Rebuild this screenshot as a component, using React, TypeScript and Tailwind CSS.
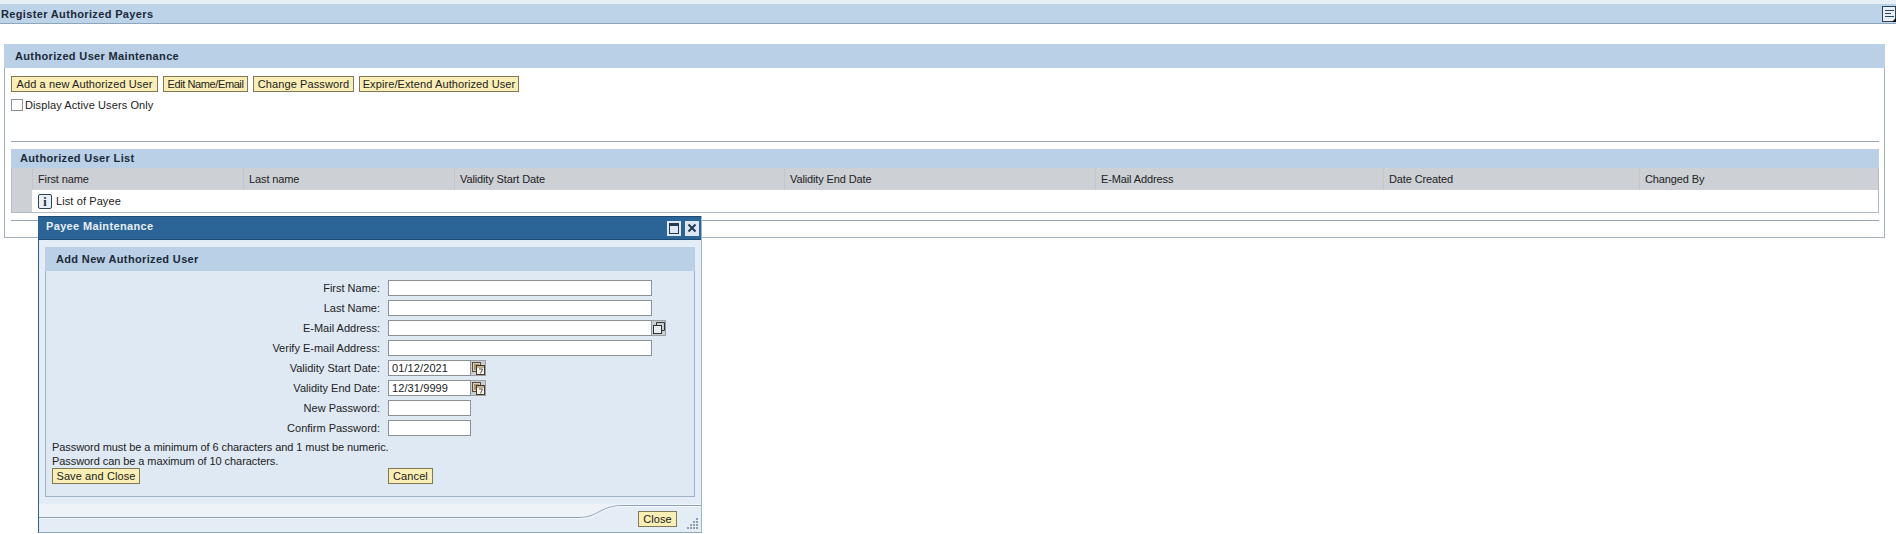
const FONT = "font-['Liberation_Sans',Arial,sans-serif]";

const columns = [
  "First name",
  "Last name",
  "Validity Start Date",
  "Validity End Date",
  "E-Mail Address",
  "Date Created",
  "Changed By",
];

function SapButton({
  label,
  className = "",
  tracking = "tracking-[0.1px]",
}: {
  label: string;
  className?: string;
  tracking?: string;
}) {
  return (
    <button
      className={`h-4 border border-[#7f7a55] bg-[#f9eeb4] text-[11px] leading-[14px] text-[#222] whitespace-nowrap ${tracking} ${className}`}
    >
      {label}
    </button>
  );
}

function CalendarIcon() {
  return (
    <span className="flex h-4 w-[15px] items-center justify-center border-y border-r border-[#9aa0a6] bg-[#c9ced3]">
      <svg width="13" height="13" viewBox="0 0 13 13">
        <rect x="0.5" y="0.5" width="8" height="9" fill="#d8d0bf" stroke="#5c4a32" />
        <path d="M2 3h5M2 5h5M2 7h3" stroke="#6a5a44" />
        <rect x="4.5" y="3.5" width="8" height="9" fill="#f6f3e8" stroke="#4a3a26" />
        <path d="M5 5h7" stroke="#8a6a3a" />
        <path d="M7 7h3.5L8.5 11.5" fill="none" stroke="#555" />
      </svg>
    </span>
  );
}

function CopyIcon() {
  return (
    <span className="flex h-4 w-[14px] items-center justify-center border-y border-r border-[#9aa0a6] bg-[#c9ced3]">
      <svg width="12" height="12" viewBox="0 0 12 12" fill="none">
        <path d="M3.5 3V0.5h8v8H9" stroke="#333" />
        <rect x="0.5" y="3.5" width="8" height="8" fill="#e8edf2" stroke="#333" />
      </svg>
    </span>
  );
}

function FormRow({
  label,
  value = "",
  width,
  after,
}: {
  label: string;
  value?: string;
  width: string;
  after?: React.ReactNode;
}) {
  return (
    <div className="flex h-[20px] items-center">
      <label className="w-[342px] pr-[8px] text-right text-[11px] text-[#222]">{label}:</label>
      <div
        className={`flex h-4 items-center border border-[#8c9196] bg-white pl-[3px] text-[11px] tracking-[0.1px] text-[#222] ${width}`}
      >
        {value}
      </div>
      {after}
    </div>
  );
}

function Dialog() {
  return (
    <div className="absolute left-[38px] top-[216px] flex h-[317px] w-[664px] flex-col border-x border-b border-l-[#2c5f8f] border-r-[#9db6cc] border-b-[#8fa9bf] bg-[#e4edf6]">
      <div className="-ml-px flex h-[24px] items-center justify-between border-y border-y-[#1f4a73] bg-[#2b6496] pl-[8px] pr-[2px]">
        <span className="pb-[4px] text-[11px] font-bold tracking-[0.35px] text-[#e8eff6]">Payee Maintenance</span>
        <div className="flex items-center gap-[4px]">
          <span className="flex h-[15px] w-[14px] items-center justify-center bg-[#dfe8f0]">
            <span className="h-[11px] w-[10px] border border-[#1f3b55] border-t-[3px]" />
          </span>
          <span className="flex h-[15px] w-[14px] items-center justify-center bg-[#dfe8f0]">
            <svg width="10" height="10" viewBox="0 0 10 10">
              <path d="M1.5 1.5l7 7M8.5 1.5l-7 7" stroke="#1f3b55" strokeWidth="2" />
            </svg>
          </span>
        </div>
      </div>

      <div className="mx-[6px] mt-[7px] flex h-[250px] flex-col border-x border-b border-[#9db2c8] bg-[#dfe9f4]">
        <div className="-mx-px flex h-[24px] shrink-0 items-center bg-[#b9d0e6] pl-[11px] text-[11px] font-bold tracking-[0.35px] text-[#1c2a38]">
          Add New Authorized User
        </div>
        <div className="pt-[7px]">
          <FormRow label="First Name" width="w-[264px]" />
          <FormRow label="Last Name" width="w-[264px]" />
          <FormRow label="E-Mail Address" width="w-[264px]" after={<CopyIcon />} />
          <FormRow label="Verify E-mail Address" width="w-[264px]" />
          <FormRow label="Validity Start Date" value="01/12/2021" width="w-[83px]" after={<CalendarIcon />} />
          <FormRow label="Validity End Date" value="12/31/9999" width="w-[83px]" after={<CalendarIcon />} />
          <FormRow label="New Password" width="w-[83px]" />
          <FormRow label="Confirm Password" width="w-[83px]" />
        </div>
        <div className="pl-[6px] pt-[2px] text-[11px] leading-[14px] tracking-[-0.07px] text-[#222]">
          <p>Password must be a minimum of 6 characters and 1 must be numeric.</p>
          <p>Password can be a maximum of 10 characters.</p>
        </div>
        <div className="flex pl-[6px]">
          <SapButton label="Save and Close" className="w-[88px]" />
          <SapButton label="Cancel" className="ml-[248px] w-[45px]" />
        </div>
      </div>

      <div className="relative mt-auto flex h-[28px] items-center justify-end pr-[24px] pt-[2px]">
        <svg className="absolute inset-0 h-full w-full" viewBox="0 0 662 28" fill="none">
          <path d="M0 0H662V1H585C560 1 560 13 540 13H0Z" fill="#eef3f8" />
          <path d="M0 13.5H540C560 13.5 560 1.5 585 1.5H662" stroke="#8fa3b6" />
          <path d="M0 14.5H540C561 14.5 561 2.5 585 2.5H662" stroke="#f4f7fa" />
        </svg>
        <SapButton label="Close" className="relative w-[39px]" />
        <svg className="absolute bottom-[2px] right-[2px]" width="14" height="14" viewBox="0 0 14 14" fill="#8f9fae">
          <rect x="11" y="2" width="2" height="2" />
          <rect x="11" y="5" width="2" height="2" />
          <rect x="8" y="5" width="2" height="2" />
          <rect x="11" y="8" width="2" height="2" />
          <rect x="8" y="8" width="2" height="2" />
          <rect x="5" y="8" width="2" height="2" />
          <rect x="11" y="11" width="2" height="2" />
          <rect x="8" y="11" width="2" height="2" />
          <rect x="5" y="11" width="2" height="2" />
          <rect x="2" y="11" width="2" height="2" />
        </svg>
      </div>
    </div>
  );
}

export default function App() {
  return (
    <div className={`relative h-[534px] w-[1896px] overflow-hidden bg-white ${FONT}`}>
      <div className="h-[4px] bg-[#e6eef6]" />
      <div className="flex h-[20px] items-center justify-between border-b border-[#8ea6ba] bg-[#bcd3e8] pl-[1px]">
        <span className="pt-[2px] text-[11px] font-bold tracking-[0.35px] text-[#1c2a38]">Register Authorized Payers</span>
        <span className="relative flex h-[16px] w-[14px] flex-col justify-center gap-[2px] border border-[#2f4558] bg-[#e8eff6] pl-[2px]">
          <span className="h-px w-[9px] bg-[#2f4558]" />
          <span className="h-px w-[6px] bg-[#2f4558]" />
          <span className="h-px w-[9px] bg-[#2f4558]" />
          <span className="absolute -bottom-px -right-px h-0 w-0 border-b-[4px] border-l-[4px] border-b-black border-l-transparent" />
        </span>
      </div>

      <div className="ml-[4px] mt-[20px] h-[194px] w-[1881px] border-x border-b border-[#9fb0be]">
        <div className="-mx-px flex h-[24px] items-center bg-[#b9d0e6] pl-[11px] text-[11px] font-bold tracking-[0.35px] text-[#1c2a38]">
          Authorized User Maintenance
        </div>
        <div className="pl-[6px] pr-[5px]">
          <div className="mt-[8px] flex gap-[5px]">
            <SapButton label="Add a new Authorized User" className="w-[147px]" />
            <SapButton label="Edit Name/Email" className="w-[85px]" tracking="tracking-[-0.4px]" />
            <SapButton label="Change Password" className="w-[101px]" />
            <SapButton label="Expire/Extend Authorized User" className="w-[160px]" />
          </div>
          <div className="mt-[7px] flex h-[12px] items-center gap-[2px]">
            <span className="h-[12px] w-[12px] border border-[#8c9196] bg-white" />
            <span className="text-[11px] tracking-[0.1px] text-[#222]">Display Active Users Only</span>
          </div>
          <div className="mt-[30px] h-px bg-[#9aa6b0]" />
          <div className="mt-[7px] border-x border-b border-[#b3bbc2]">
            <div className="-mx-px flex h-[19px] items-center bg-[#b9d0e6] pl-[9px] text-[11px] font-bold tracking-[0.35px] text-[#1c2a38]">
              Authorized User List
            </div>
            <div className="grid h-[22px] grid-cols-[20px_211px_211px_330px_311px_288px_256px_1fr] items-center bg-[#cdd1d5] text-[11px] tracking-[-0.12px] text-[#222]">
              <div />
              {columns.map((c) => (
                <div key={c} className="flex h-full items-center border-l border-[#c2c7cc] pl-[5px] pt-px first:border-l-0">
                  {c}
                </div>
              ))}
            </div>
            <div className="flex h-[22px]">
              <div className="w-[20px] bg-[#cdd1d5]" />
              <div className="flex items-center gap-[4px] pl-[6px] pt-px text-[11px] tracking-[0.1px] text-[#222]">
                <span className="flex h-[15px] w-[14px] items-center justify-center rounded-[2px] border border-[#2f4558] bg-[#e8eff6] font-['Liberation_Serif',serif] text-[12px] font-bold leading-none text-[#1c2a38]">
                  i
                </span>
                List of Payee
              </div>
            </div>
          </div>
          <div className="mt-[7px] h-px bg-[#9aa6b0]" />
        </div>
      </div>

      <Dialog />
    </div>
  );
}
